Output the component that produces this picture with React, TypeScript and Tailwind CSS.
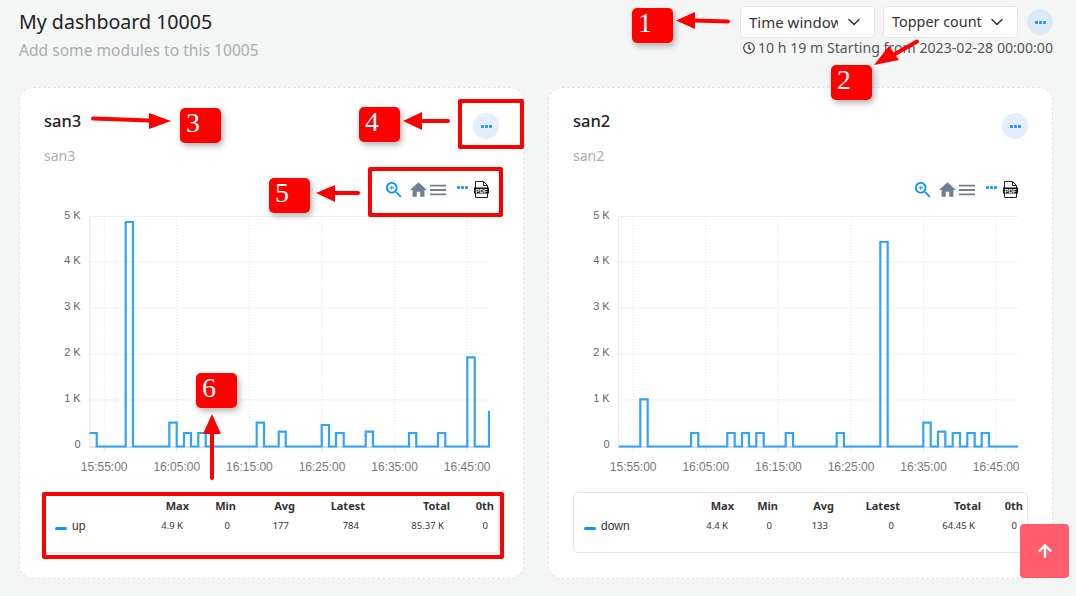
import React from "react";
import { FaArrowUp, FaRegClock } from "react-icons/fa";
import { ChevronDown } from "lucide-react";

type Point = [number, number];

const BASE = 446.5;

// [rise x, fall x, top y]
const upPulses: [number, number, number][] = [
  [125.7, 133, 222],
  [169.3, 176.7, 422.7],
  [184, 191, 433],
  [198.3, 205.7, 433],
  [256.7, 264, 422.7],
  [278.7, 285.7, 431.7],
  [321.7, 329, 425],
  [336, 343.7, 433],
  [365.7, 373, 431.7],
  [409, 416.3, 433],
  [438, 445.3, 433],
  [467.3, 474.7, 357.3],
];

const downPulses: [number, number, number][] = [
  [640.3, 647.7, 399.3],
  [691, 698.3, 433],
  [727.3, 734.7, 433],
  [742, 749, 433],
  [756.3, 763.7, 433],
  [785.7, 793, 433],
  [836.7, 844, 433],
  [880.3, 887.7, 242],
  [923.3, 930.7, 422.7],
  [938, 945.3, 431.7],
  [952.7, 960, 433],
  [967.3, 974.7, 433],
  [981.7, 989, 433],
];

function pulsesToPoints(pulses: [number, number, number][]): Point[] {
  const pts: Point[] = [];
  pulses.forEach(([a, b, top]) => {
    pts.push([a, BASE], [a, top], [b, top], [b, BASE]);
  });
  return pts;
}

const upPoints: Point[] = [
  [89.7, 433],
  [96.7, 433],
  [96.7, BASE],
  ...pulsesToPoints(upPulses),
  [489, BASE],
  [489, 410.7],
];

const downPoints: Point[] = [
  [618.7, BASE],
  ...pulsesToPoints(downPulses),
  [1018, BASE],
];

const yTicks = [
  { label: "5 K", y: 216.5, textY: 218.5 },
  { label: "4 K", y: 262, textY: 264 },
  { label: "3 K", y: 308, textY: 310 },
  { label: "2 K", y: 354, textY: 356 },
  { label: "1 K", y: 400, textY: 402 },
  { label: "0", y: 446.5, textY: 448 },
];

const xLabels = ["15:55:00", "16:05:00", "16:15:00", "16:25:00", "16:35:00", "16:45:00"];

function Chart({ left, points }: { left: number; points: Point[] }) {
  // left is the page x of the plot's left axis, the svg uses page coordinates
  const right = left + 399.5;
  const first = left + 14.5;
  return (
    <svg
      width={455}
      height={272}
      viewBox={`${left - 45.7} 208 455 272`}
      className="block font-['Liberation_Sans',sans-serif]"
    >
      {yTicks.map((t) => (
        <g key={t.label}>
          <line x1={left} x2={right} y1={t.y} y2={t.y} stroke="#f1f1f1" />
          <text x={left - 9} y={t.textY} textAnchor="end" className="fill-[#666] text-[11px]">
            {t.label}
          </text>
        </g>
      ))}
      {xLabels.map((label, i) => {
        const x = first + i * 72.6;
        return (
          <g key={label}>
            <line x1={x} x2={x} y1={216} y2={446} stroke="#e2e2e2" strokeDasharray="1 2" />
            <line x1={x} x2={x} y1={447} y2={452} stroke="#e4e4e4" />
            <text x={x} y={471} textAnchor="middle" className="fill-[#777] text-[12px]">
              {label}
            </text>
          </g>
        );
      })}
      <line x1={left} x2={left} y1={216} y2={447} stroke="#e6e6e6" />
      <line x1={left} x2={right} y1={447} y2={447} stroke="#e2dfdb" strokeWidth={2} />
      <polyline
        fill="none"
        stroke="#30a4fb"
        strokeWidth={2.2}
        points={points.map((p) => p.join(",")).join(" ")}
      />
    </svg>
  );
}

function Dots({ className }: { className?: string }) {
  return (
    <svg viewBox="0 0 11 3" className={`h-[3px] w-[11px] fill-[#2196f3] ${className ?? ""}`}>
      <rect x="0" width="3" height="3" rx="0.8" />
      <rect x="4" width="3" height="3" rx="0.8" />
      <rect x="8" width="3" height="3" rx="0.8" />
    </svg>
  );
}

function MoreButton({ className }: { className: string }) {
  return (
    <div className={`flex h-[26px] w-[26px] shrink-0 items-center justify-center rounded-full ${className}`}>
      <Dots />
    </div>
  );
}

function Toolbar() {
  return (
    <div className="flex h-[20px] items-center justify-end pr-[10px]">
      <svg viewBox="3 3 18 18" className="mt-[1px] h-[16px] w-[16px] fill-[#0d94fb]">
        <path d="M15.5 14h-.79l-.28-.27C15.41 12.59 16 11.11 16 9.5 16 5.91 13.09 3 9.5 3S3 5.91 3 9.5 5.91 16 9.5 16c1.61 0 3.09-.59 4.23-1.57l.27.28v.79l5 4.99L20.49 19l-4.99-5zm-6 0C7.01 14 5 11.99 5 9.5S7.01 5 9.5 5 14 7.01 14 9.5 11.99 14 9.5 14z" />
        <path d="M12 10h-2v2H9v-2H7V9h2V7h1v2h2v1z" />
      </svg>
      <svg viewBox="2 3 20 17" className="mt-[1px] ml-[8px] h-[15px] w-[17px] fill-[#6e8192]">
        <path d="M10 20v-6h4v6h5v-8h3L12 3 2 12h3v8z" />
      </svg>
      <svg viewBox="3 6 18 12" className="mt-[1px] ml-[3px] h-[12px] w-[16px] fill-[#6e8192]">
        <path d="M3 18h18v-2H3v2zm0-5h18v-2H3v2zm0-7v2h18V6H3z" />
      </svg>
      <Dots className="mb-[3px] ml-[11px]" />
      <svg viewBox="0 0 15 17" className="ml-[6px] h-[17px] w-[15px]">
        <path d="M1.5.5h8l4 4v12h-12z" fill="#fff" stroke="#222" />
        <path d="M9.5.5v4h4" fill="none" stroke="#222" />
        <rect x="0" y="6.5" width="15" height="6" fill="#111" />
        <text x="7.5" y="11.5" textAnchor="middle" className="fill-white font-['Liberation_Sans',sans-serif] text-[6px] font-bold">
          PDF
        </text>
      </svg>
    </div>
  );
}

const heads = ["Max", "Min", "Avg", "Latest", "Total", "0th"];

function Legend({ name, values, cols }: { name: string; values: string[]; cols: string }) {
  return (
    <div className="h-[61px] rounded-[4px] border border-[#e8e6e1] pt-[6px]">
      <div className={`grid ${cols} text-right text-[11px] leading-[14px] font-bold text-[#333]`}>
        <span />
        {heads.map((h) => (
          <span key={h}>{h}</span>
        ))}
      </div>
      <div className={`mt-[6px] grid ${cols} items-center text-right text-[9.5px] leading-[14px] text-[#333]`}>
        <span className="flex items-center pl-[10px] text-left font-['Liberation_Sans',sans-serif] text-[12px]">
          <i className="mt-[4px] mr-[5px] h-[3px] w-[12px] rounded-full bg-[#0d94fb]" />
          {name}
        </span>
        {values.map((v, i) => (
          <span key={i} className="pr-[6px]">
            {v}
          </span>
        ))}
      </div>
    </div>
  );
}

function Card(props: {
  title: string;
  left: number;
  points: Point[];
  values: string[];
  cols: string;
}) {
  return (
    <div className="h-[492px] w-[505px] shrink-0 rounded-[14px] border border-dashed border-[#e2e4e4] bg-white px-[24px] pt-[25px]">
      <div className="flex items-start justify-between">
        <h2 className="text-[16.5px] leading-[16px] font-medium text-[#222]">{props.title}</h2>
        <MoreButton className="bg-[#e3eefd]" />
      </div>
      <p className="mt-[7px] text-[14px] leading-[20px] text-[#a9adb1]">{props.title}</p>
      <div className="mt-[13px]">
        <Toolbar />
      </div>
      <div className="mt-[9px]">
        <Chart left={props.left} points={props.points} />
      </div>
      <div className="mt-[12px]">
        <Legend name={props.title === "san3" ? "up" : "down"} values={props.values} cols={props.cols} />
      </div>
    </div>
  );
}

function Dropdown({ label, clip }: { label: string; clip?: boolean }) {
  return (
    <div
      className={`flex h-[32px] w-[135px] items-center rounded-[4px] border border-[#e6e6e0] bg-white pr-[10px] pl-[8px] text-[#333] ${
        clip ? "text-[15px]" : "text-[14.4px]"
      }`}
    >
      <span className={clip ? "w-[89px] overflow-hidden whitespace-nowrap" : "w-[89px] whitespace-nowrap"}>{label}</span>
      <ChevronDown className="ml-auto h-[20px] w-[20px] text-[#333]" strokeWidth={1.8} />
    </div>
  );
}

function Badge({ n, className }: { n: number; className: string }) {
  return (
    <div
      className={`absolute h-[35px] w-[41px] rounded-[5px] bg-[#ff0000] pl-[6px] font-['Liberation_Serif',serif] text-[28px] leading-[30px] text-white shadow-[2px_3px_6px_rgba(0,0,0,0.3)] ${className}`}
    >
      {n}
    </div>
  );
}

function Annotations() {
  return (
    <>
      <svg width={1076} height={596} className="pointer-events-none absolute top-0 left-0">
        <g stroke="#ff0000" strokeWidth={4} strokeLinecap="round">
          <line x1={694} y1={20.5} x2={728} y2={21.5} />
          <line x1={895} y1={54} x2={917} y2={41.5} />
          <line x1={93} y1={118.5} x2={150} y2={120.5} />
          <line x1={422} y1={121} x2={448} y2={121} />
          <line x1={335} y1={193} x2={358} y2={193} />
          <line x1={212} y1={433} x2={212} y2={478} />
        </g>
        <g fill="#ff0000">
          <polygon points="676,20.5 695,12 695,29" />
          <polygon points="874,65 889,46 899,60" />
          <polygon points="171,121 149,113 149,129" />
          <polygon points="403,121 422,112 422,130" />
          <polygon points="316,193 335,185 335,202" />
          <polygon points="212,414 203,434 221,434" />
        </g>
      </svg>
      <div className="absolute top-[99px] left-[458px] h-[50px] w-[66px] rounded-[2px] border-[4px] border-[#ff0000]" />
      <div className="absolute top-[167px] left-[368px] h-[50px] w-[135px] rounded-[2px] border-[4px] border-[#ff0000]" />
      <div className="absolute top-[492px] left-[42px] h-[67px] w-[462px] rounded-[2px] border-[4px] border-[#ff0000]" />
      <Badge n={1} className="top-[8px] left-[632px]" />
      <Badge n={2} className="top-[65px] left-[831px]" />
      <Badge n={3} className="top-[108px] left-[180px]" />
      <Badge n={4} className="top-[107px] left-[359px]" />
      <Badge n={5} className="top-[178px] left-[269px]" />
      <Badge n={6} className="top-[373px] left-[196px]" />
    </>
  );
}

export default function App() {
  return (
    <div className="relative h-[596px] w-[1076px] overflow-hidden bg-[#f4f6f6] font-['Noto_Sans',sans-serif]">
      <header className="flex h-[87px] justify-between pr-[23px] pl-[19px]">
        <div className="pt-[8px]">
          <h1 className="text-[19.6px] leading-[28px] text-[#222]">My dashboard 10005</h1>
          <p className="mt-[3px] text-[15.6px] leading-[22px] text-[#a9adb1]">Add some modules to this 10005</p>
        </div>
        <div className="pt-[6px]">
          <div className="flex items-center gap-[8px]">
            <Dropdown label="Time window" clip />
            <Dropdown label="Topper count" />
            <MoreButton className="ml-[1px] bg-[#dde9f5]" />
          </div>
          <div className="flex h-[20px] items-center justify-end text-[14.15px] text-[#555]">
            <FaRegClock className="mr-[3px] h-[12px] w-[12px] text-[#333]" />
            10 h 19 m Starting from 2023-02-28 00:00:00
          </div>
        </div>
      </header>
      <main className="flex gap-[24px] pl-[19px]">
        <Card
          title="san3"
          left={89.7}
          points={upPoints}
          values={["4.9 K", "0", "177", "784", "85.37 K", "0"]}
          cols="grid-cols-[99px_45px_47px_59px_70px_85px_44px]"
        />
        <Card
          title="san2"
          left={618.7}
          points={downPoints}
          values={["4.4 K", "0", "133", "0", "64.45 K", "0"]}
          cols="grid-cols-[110px_50px_44px_56px_66px_81px_42px]"
        />
      </main>
      <button className="absolute top-[524px] left-[1020px] flex h-[54px] w-[49px] items-center justify-center rounded-[4px] bg-[#ff5c6e] text-white">
        <FaArrowUp className="h-[16px] w-[16px]" />
      </button>
      <Annotations />
    </div>
  );
}
